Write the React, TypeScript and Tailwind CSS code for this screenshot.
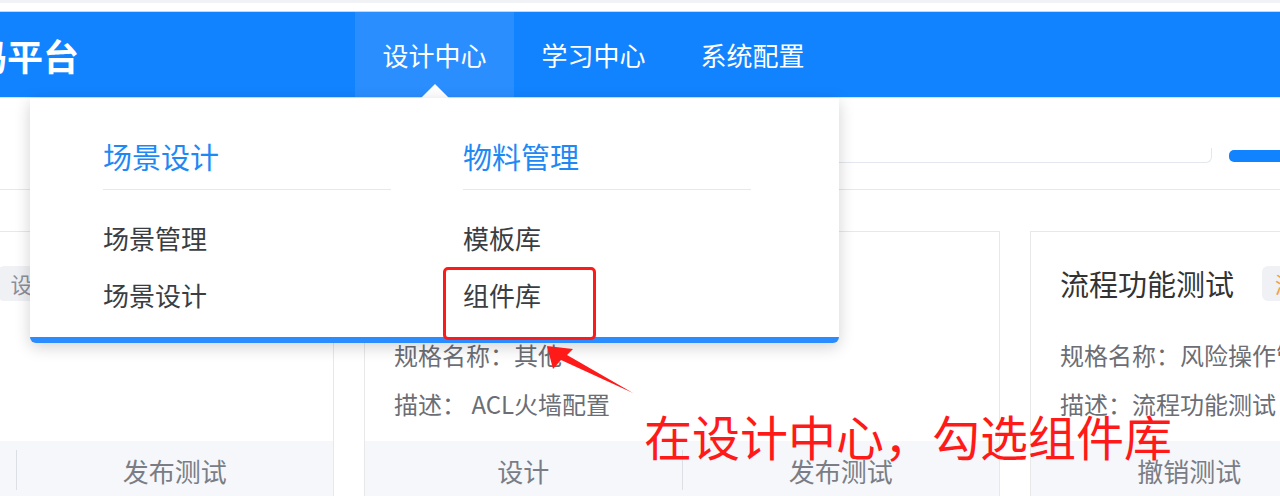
import React from "react";

const navItems = ["设计中心", "学习中心", "系统配置"];

interface CardProps {
  title: string;
  tag: string;
  tagClass: string;
  spec: string;
  desc: string;
  actions: string[];
}

function Card({ title, tag, tagClass, spec, desc, actions }: CardProps) {
  return (
    <div className="flex h-[300px] w-[636px] shrink-0 flex-col border border-[#e8e8e8] bg-white">
      <div className="px-[29px] pt-[33px]">
        <div className="flex items-center">
          <span className="whitespace-nowrap text-[29px] leading-[36px] text-[#333]">{title}</span>
          <span className={`whitespace-nowrap rounded-[6px] bg-[#f0f1f5] px-[13px] text-[22px] leading-[35px] ${tagClass}`}>
            {tag}
          </span>
        </div>
        <div className="mt-[38px] whitespace-nowrap text-[24px] leading-[32px] text-[#6b6e75]">{spec}</div>
        <div className="mt-[17px] whitespace-nowrap text-[24px] leading-[32px] text-[#6b6e75]">{desc}</div>
      </div>
      <div className="mt-[21px] flex h-[58px] items-center bg-[#f5f7fa]">
        {actions.map((a, i) => (
          <div
            key={i}
            className={`flex h-[40px] flex-1 items-center justify-center text-[26px] text-[#7a7d85] ${
              i > 0 ? "border-l border-[#dcdfe6]" : ""
            }`}
          >
            {a}
          </div>
        ))}
      </div>
    </div>
  );
}

export default function App() {
  return (
    <div className="relative h-[496px] w-[1280px] overflow-hidden bg-white font-['Noto_Sans_CJK_SC','Noto_Sans',sans-serif]">
      <div className="h-[3px] bg-[#f0f2f5]" />
      <div className="h-[9px] border-b border-[#d4d4d4] bg-white" />

      {/* header */}
      <header className="flex h-[86px] items-stretch border-b border-[#cfe3ff] bg-[#1283ff]">
        <div className="flex w-[355px] shrink-0 items-center">
          <span className="ml-[-101px] whitespace-nowrap text-[36px] font-bold text-white">低代码平台</span>
        </div>
        {navItems.map((item, i) => (
          <div
            key={item}
            className={`relative flex w-[159px] items-center justify-center text-[26px] text-white ${
              i === 0 ? "bg-[#2a8eff]" : ""
            }`}
          >
            {item}
            {i === 0 && (
              <span className="absolute bottom-[-1px] left-1/2 h-0 w-0 -translate-x-1/2 border-x-[14px] border-b-[14px] border-x-transparent border-b-white" />
            )}
          </div>
        ))}
      </header>

      {/* toolbar */}
      <div className="flex h-[92px] items-start justify-end border-b border-[#e8e8e8]">
        <div className="mt-[50px] h-[15px] w-[600px] rounded-b-[6px] border-x border-b border-[#e4e7ed]" />
        <div className="ml-[17px] mr-[-10px] mt-[52px] h-[12px] w-[61px] rounded-l-[5px] bg-[#1283ff]" />
      </div>

      <div className="h-[41px]" />

      {/* cards */}
      <div className="ml-[-302px] flex gap-[30px]">
        <Card
          title="ACL火墙配置测试"
          tag="设计中"
          tagClass="ml-[44px] text-[#8c8f99]"
          spec="规格名称：其他"
          desc="描述：设备配置"
          actions={["设计", "发布测试"]}
        />
        <Card
          title="ACL火墙配置"
          tag="设计中"
          tagClass="ml-[28px] text-[#8c8f99]"
          spec="规格名称：其他"
          desc="描述： ACL火墙配置"
          actions={["设计", "发布测试"]}
        />
        <Card
          title="流程功能测试"
          tag="测试中"
          tagClass="ml-[28px] text-[#f0a050]"
          spec="规格名称：风险操作管理"
          desc="描述：流程功能测试"
          actions={["撤销测试", "发布"]}
        />
      </div>

      {/* dropdown menu */}
      <div className="absolute left-[30px] top-[98px] z-10 h-[245px] w-[809px] rounded-b-[6px] border-b-[6px] border-[#2b8cff] bg-white shadow-[0_4px_16px_rgba(0,0,0,0.18)]">
        <div className="flex gap-[72px] pl-[73px] pt-[38px]">
          {[
            { head: "场景设计", items: ["场景管理", "场景设计"] },
            { head: "物料管理", items: ["模板库", "组件库"] },
          ].map((col) => (
            <div key={col.head} className="w-[288px]">
              <div className="border-b border-[#e8e8e8] pb-[13px] text-[29px] leading-[40px] text-[#1e88f5]">
                {col.head}
              </div>
              <div className="mt-[28px] text-[26px] leading-[40px] text-[#3a3d42]">{col.items[0]}</div>
              <div className="mt-[17px] text-[26px] leading-[40px] text-[#3a3d42]">{col.items[1]}</div>
            </div>
          ))}
        </div>
      </div>

      {/* annotations */}
      <div className="absolute left-[443px] top-[267px] z-20 h-[73px] w-[153px] rounded-[5px] border-[3px] border-[#ff1a1a]" />
      <svg className="absolute left-0 top-0 z-20" width="1280" height="496" viewBox="0 0 1280 496">
        <polygon points="547,346 573,349 567,355 633,393 561,360 553,369" fill="#ff1a1a" />
      </svg>
      <div className="absolute left-[644px] top-[409px] z-20 whitespace-nowrap text-[48px] leading-[52px] text-[#ff1a1a]">
        在设计中心，勾选组件库
      </div>
    </div>
  );
}
